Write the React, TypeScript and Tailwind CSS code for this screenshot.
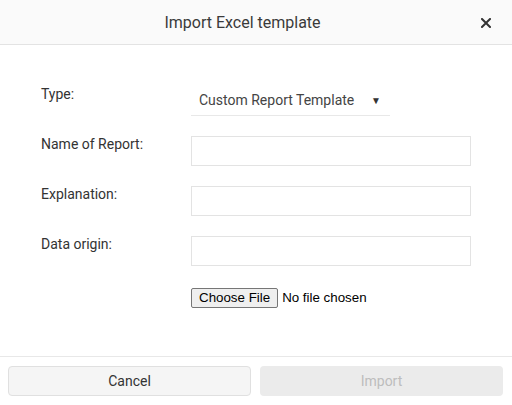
import React from 'react';

const labelCls = 'w-[150px] shrink-0 text-[14px] leading-5 text-[#333]';
const inputCls = 'h-[30px] w-[280px] border border-[#e3e3e3] bg-white px-2 text-[14px] text-[#333] outline-none';

export default function App() {
  return (
    <div className="flex h-[405px] w-[512px] flex-col bg-white font-['Roboto',sans-serif]">
      <div className="relative flex h-[45px] shrink-0 items-center justify-center border-b border-[#e3e3e3] bg-[#fafafa] pr-[27px] pt-[2px]">
        <h1 className="text-[16px] text-[#3a3a3a]">Import Excel template</h1>
        <button className="absolute right-[21px] top-[17px] flex h-[11px] w-[11px] items-center justify-center text-[#333]">
          <svg viewBox="0 0 10 10" className="h-[10px] w-[10px]" fill="none" stroke="currentColor" strokeWidth="2" strokeLinecap="square">
            <path d="M1 1L9 9M9 1L1 9" />
          </svg>
        </button>
      </div>

      <div className="flex flex-1 flex-col pl-[41px] pt-[39px]">
        <div className="flex items-start">
          <label className={labelCls}>Type:</label>
          <div className="flex h-[32px] w-[199px] items-start justify-between border-b border-[#e8e8e8] pl-2 pr-[9px] pt-[6px] text-[14px] leading-5 text-[#444]">
            <span>Custom Report Template</span>
            <span className="mt-[1px] text-[10px] text-[#333]">▼</span>
          </div>
        </div>

        <div className="mt-5 flex flex-col gap-5">
          {['Name of Report:', 'Explanation:', 'Data origin:'].map((l) => (
            <div key={l} className="flex items-start">
              <label className={`${labelCls} -mt-0.5`}>{l}</label>
              <input type="text" className={inputCls} />
            </div>
          ))}
        </div>

        <div className="mt-[22px] flex">
          <div className="w-[150px] shrink-0" />
          <input
            type="file"
            className="font-['Liberation_Sans',Arial,sans-serif] text-[13.33px] leading-4 text-black file:mr-[4px] file:rounded-[2px] file:border file:border-[#767676] file:bg-[#efefef] file:px-[7px] file:py-[1px] file:text-black"
          />
        </div>
      </div>

      <div className="grid shrink-0 grid-cols-2 gap-[9px] border-t border-[#e8e8e8] pb-[9px] pl-2 pr-[9px] pt-[9px]">
        <button className="h-[30px] rounded-[4px] border border-[#e0e0e0] bg-[#f5f5f5] text-[14px] text-[#333]">Cancel</button>
        <button disabled className="h-[30px] rounded-[4px] bg-[#ebebeb] text-[14px] text-[#bdbdbd]">Import</button>
      </div>
    </div>
  );
}
